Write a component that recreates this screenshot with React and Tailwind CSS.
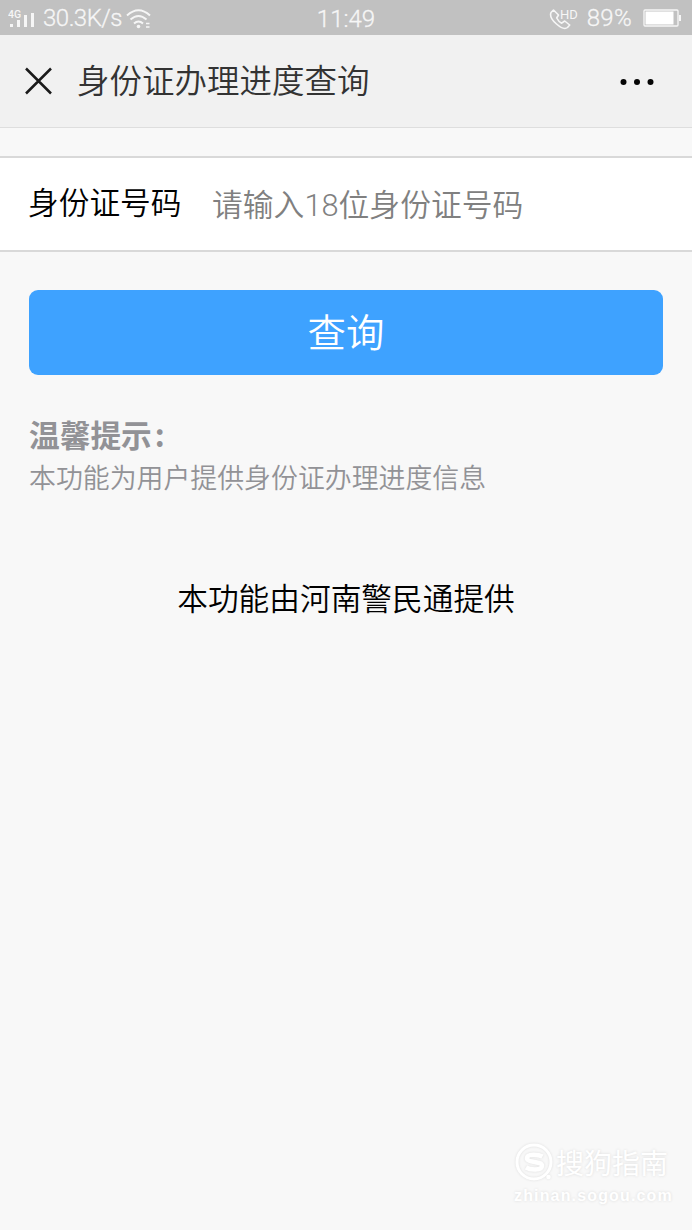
import { useState } from 'react'

const FONT = "font-['Roboto','Noto_Sans_CJK_SC',sans-serif]"

export default function App() {
  return (
    <div className={`h-[1230px] w-[692px] flex flex-col bg-[#f8f8f8] text-black overflow-hidden ${FONT}`}>
      <StatusBar />
      <NavBar title="身份证办理进度查询" />
      <main className="flex flex-1 flex-col pt-[28px]">
        <QueryForm />
        <section className="px-[29px] pt-[38px] text-[#929296]">
          <h2 className="mb-[3px] h-[42px] text-[30.7px] leading-[42px] font-bold">
            温馨提示<span className="ml-[3px] font-['Noto_Sans_CJK_SC']">:</span>
          </h2>
          <p className="text-[26.9px] leading-[42px] font-[350] whitespace-nowrap">
            本功能为用户提供身份证办理进度信息
          </p>
        </section>
        <p className="mt-[78px] text-center text-[30.7px] leading-[44px] font-[350]">本功能由河南警民通提供</p>
        <Watermark />
      </main>
    </div>
  )
}

function StatusBar() {
  return (
    <div className="h-[35px] shrink-0 grid grid-cols-3 items-center bg-[#c1c1c1] text-[#f6f6f6] text-[24px] leading-[35px] font-light">
      <div className="flex items-center pl-[8px]">
        <SignalIcon />
        <span className="ml-[7px] w-[80px] whitespace-nowrap tracking-[-0.5px] [-webkit-text-stroke:0.3px_#f6f6f6]">30.3K/s</span>
        <WifiIcon />
      </div>
      <span className="pt-[2px] text-center [-webkit-text-stroke:0.3px_#f6f6f6]">11:49</span>
      <div className="flex items-center justify-end pr-[10px]">
        <CallIcon />
        <span className="ml-[8px] mr-[11px] tracking-[0.3px] [-webkit-text-stroke:0.3px_#f6f6f6]">89%</span>
        <BatteryIcon />
      </div>
    </div>
  )
}

function NavBar({ title }) {
  return (
    <header className="h-[93px] shrink-0 flex items-center bg-[#f1f1f1] border-b border-[#dedede] pl-[24px] pr-[37px]">
      <button aria-label="关闭">
        <svg width="29" height="29" viewBox="0 0 29 29" fill="none" stroke="#1a1a1a" strokeWidth="2.5">
          <path d="M2 1.500 27 26.500M27 1.500 2 26.500" />
        </svg>
      </button>
      <h1 className="ml-[24px] pt-[2px] flex-1 text-[32.5px] leading-[48px] font-[350] text-[#333333]">{title}</h1>
      <button aria-label="更多" className="pt-[2px]">
        <svg width="36" height="8" viewBox="0 0 36 8" fill="#050505">
          <circle cx="4.5" cy="4" r="3" />
          <circle cx="18" cy="4" r="3" />
          <circle cx="31.5" cy="4" r="3" />
        </svg>
      </button>
    </header>
  )
}

function QueryForm() {
  const [idNumber, setIdNumber] = useState('')

  return (
    <form onSubmit={(e) => e.preventDefault()}>
      <div className="h-[96px] flex items-center bg-white border-y-2 border-[#d9d9d9] px-[28px]">
        <label htmlFor="id-number" className="w-[184px] shrink-0 text-[30.7px] leading-[44px] font-[350]">
          身份证号码
        </label>
        <input
          id="id-number"
          value={idNumber}
          maxLength={18}
          onChange={(e) => setIdNumber(e.target.value)}
          placeholder="请输入18位身份证号码"
          className="min-w-0 flex-1 h-[60px] pt-[2px] text-[30.8px] font-[350] outline-none placeholder:text-[#808080]"
        />
      </div>
      <div className="px-[29px] pt-[38px]">
        <button className="h-[85px] w-full rounded-[9px] bg-[#3ea2ff] pt-[2px] text-white text-[38.4px] leading-[83px] font-[350]">
          查询
        </button>
      </div>
    </form>
  )
}

function Watermark() {
  return (
    <div className="mt-auto mb-[22px] ml-[514px] w-[160px] text-white [text-shadow:0_0_3px_#dadada]">
      <div className="flex items-center">
        <svg width="40" height="42" viewBox="0 0 40 42" fill="none" stroke="white" className="shrink-0 [filter:drop-shadow(0_0_1px_#dcdcdc)]">
          <circle cx="20" cy="20" r="17" strokeWidth="3" />
          <path d="M28.500 14.500C25 12.500 13 11 13 16.200c0 5 15 2.500 15 7.600 0 5.200-12 4.200-16 1.700" strokeWidth="4.500" />
          <circle cx="34.500" cy="35" r="2.300" fill="white" stroke="none" />
        </svg>
        <span className="ml-[2px] pt-[3px] text-[28px] leading-[39px] whitespace-nowrap">搜狗指南</span>
      </div>
      <div className="font-['Liberation_Sans',sans-serif] text-[16px] leading-[24px] font-bold tracking-[1.15px] whitespace-nowrap">
        zhinan.sogou.com
      </div>
    </div>
  )
}

function SignalIcon() {
  return (
    <svg width="28" height="20" viewBox="0 0 28 20" fill="currentColor" className="shrink-0">
      <text x="0" y="8.500" fontSize="10.500" fontWeight="500">4G</text>
      <rect x="2" y="15" width="3" height="3" />
      <rect x="9" y="11" width="3" height="7" />
      <rect x="16" y="6" width="3" height="12" />
      <rect x="23" y="4" width="3" height="14" />
    </svg>
  )
}

function WifiIcon() {
  return (
    <svg width="26" height="22" viewBox="0 0 26 22" fill="none" stroke="currentColor" strokeWidth="2" className="ml-[3px] shrink-0">
      <path d="M1 7.500Q12.500-3 24 7.500M4.500 11.500q8-7 16 0M8 15.500q4.500-4 9 0" />
      <circle cx="12.500" cy="18.500" r="1.800" fill="currentColor" stroke="none" />
      <path d="M20 15.500h3.500M20 19h3.500" strokeWidth="1.300" />
    </svg>
  )
}

function CallIcon() {
  return (
    <svg width="30" height="24" viewBox="0 0 30 24" fill="none" stroke="currentColor" strokeWidth="1.600" className="shrink-0">
      <path d="M4.500 3 2 5.500C.5 9 3 13 7.500 17s8.500 5.500 11 3.500l2.200-2.500-5-4-3 2.200c-2-1-4-3.200-5-5.200L9.500 8Z" strokeLinejoin="round" />
      <text x="11" y="12" fontSize="13" fill="currentColor" stroke="none" fontWeight="400">HD</text>
    </svg>
  )
}

function BatteryIcon() {
  return (
    <svg width="39" height="20" viewBox="0 0 39 20" fill="none" className="shrink-0">
      <rect x="1" y="1" width="34" height="16" rx="1" stroke="currentColor" strokeWidth="1.300" />
      <rect x="2.500" y="2.500" width="28" height="13" fill="white" />
      <path d="M37 6v6" stroke="currentColor" strokeWidth="2" />
    </svg>
  )
}
